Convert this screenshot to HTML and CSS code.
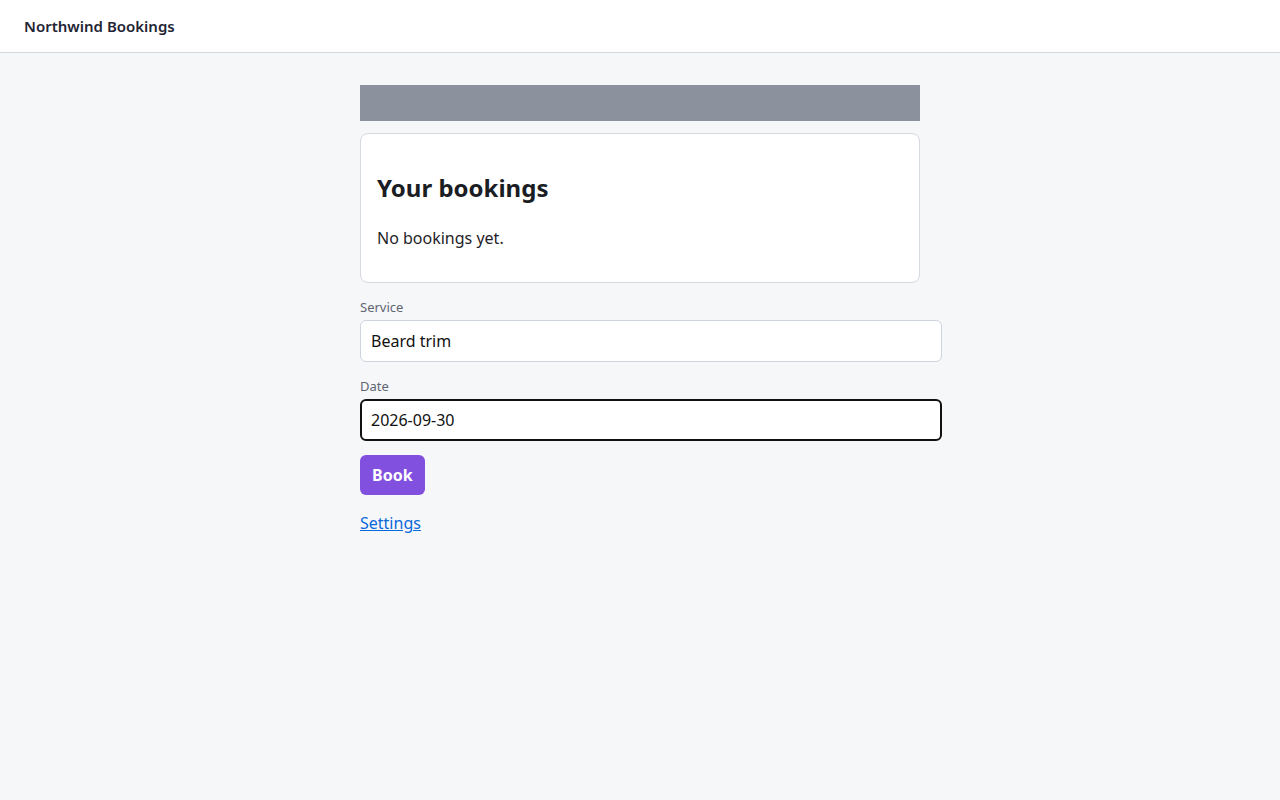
FILE: index.html
```html
<!DOCTYPE html>
<html lang="en">
<head>
<meta charset="utf-8">
<title>Northwind Bookings</title>
<link rel="stylesheet" href="styles.css">
</head>
<body>
<header class="topbar">
  <span class="brand">Northwind Bookings</span>
</header>
<main class="page">
  <div class="banner"></div>
  <section class="card">
    <h2 class="card-title">Your bookings</h2>
    <p class="card-text">No bookings yet.</p>
  </section>
  <form class="form">
    <label class="field-label" for="service">Service</label>
    <input class="field-input" id="service" type="text" value="Beard trim">
    <label class="field-label" for="date">Date</label>
    <input class="field-input is-focused" id="date" type="text" value="2026-09-30">
    <button class="btn" type="button">Book</button>
  </form>
  <a class="link" href="#">Settings</a>
</main>
</body>
</html>
```
FILE: styles.css
```css
* { box-sizing: content-box; }
html, body {
  margin: 0;
  padding: 0;
}
body {
  background: #f6f7f9;
  font-family: "Noto Sans", "Open Sans", sans-serif;
  color: #1f2328;
  font-size: 16px;
  line-height: 1.5;
}
.topbar {
  height: 53px;
  box-sizing: border-box;
  background: #ffffff;
  border-bottom: 1px solid #d5d9e0;
  display: flex;
  align-items: center;
  padding: 0 24px;
}
.brand {
  font-size: 15px;
  font-weight: 600;
  color: #1f2533;
}
.page {
  width: 560px;
  margin: 0 auto;
  padding-top: 32px;
}
.banner {
  height: 36px;
  background: #8b929e;
  margin-bottom: 12px;
}
.card {
  background: #ffffff;
  border: 1px solid #d5d9e0;
  border-radius: 8px;
  padding: 16px;
}
.card-title {
  font-size: 24px;
  font-weight: 700;
  line-height: 36px;
  margin: 20px 0;
  color: #1a1d23;
}
.card-text {
  margin: 0 0 16px;
  line-height: 24px;
  color: #1f2328;
}
.form {
  display: flex;
  flex-direction: column;
  align-items: flex-start;
  padding-top: 15px;
}
.field-label {
  font-size: 13px;
  line-height: 18px;
  color: #5f6673;
  margin-bottom: 4px;
}
.field-input {
  width: 560px;
  height: 22px;
  padding: 9px 10px;
  border: 1px solid #cdd4de;
  border-radius: 6px;
  background: #ffffff;
  font-family: inherit;
  font-size: 16px;
  color: #111111;
  margin: 0 0 15px;
  outline: none;
}
.field-input.is-focused {
  border: 2px solid #111111;
  padding: 8px 9px;
  margin-bottom: 14px;
}
.btn {
  height: 40px;
  padding: 0 12px;
  border: none;
  border-radius: 6px;
  background: #8250df;
  color: #ffffff;
  font-family: inherit;
  font-size: 16px;
  font-weight: 700;
  cursor: pointer;
}
.link {
  display: inline-block;
  margin-top: 16px;
  color: #0969da;
  text-decoration: underline;
  font-size: 16px;
  line-height: 24px;
}
```
